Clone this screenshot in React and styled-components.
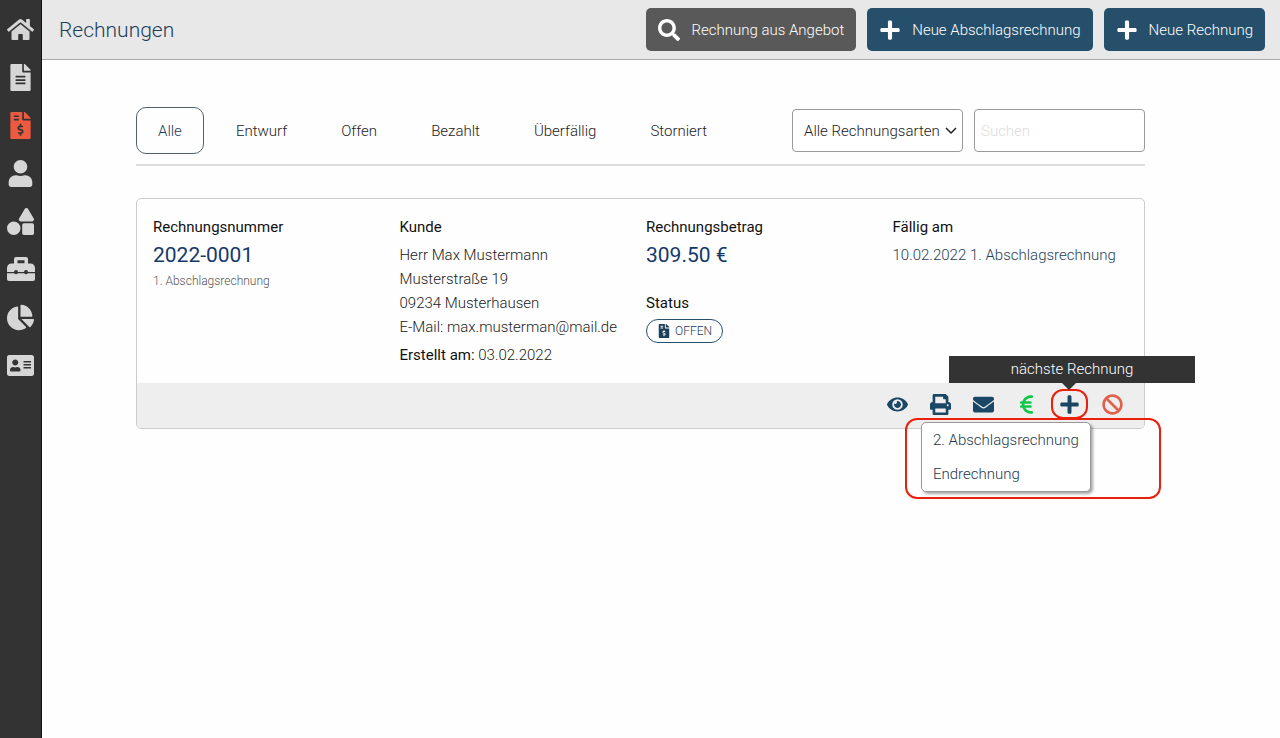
import React from "react";
import styled, { createGlobalStyle, css } from "styled-components";
import {
  FaAddressCard,
  FaBan,
  FaChartPie,
  FaEnvelope,
  FaEye,
  FaFileAlt,
  FaFileInvoiceDollar,
  FaHome,
  FaPlus,
  FaPrint,
  FaSearch,
  FaShapes,
  FaUser
} from "react-icons/fa";
import { FaEuroSign } from "react-icons/fa6";

const GlobalStyle = createGlobalStyle`
  *, *::before, *::after {
    box-sizing: border-box;
  }

  body {
    margin: 0;
    background: #fefefe;
    color: #222;
    font-family: Roboto, "Liberation Sans", sans-serif;
    font-size: 15px;
    font-weight: 300;
    line-height: 24px;
  }

  button, input, select {
    font: inherit;
  }
`;

const Page = styled.div`
  display: flex;
  min-height: 100vh;
`;

const Sidebar = styled.nav`
  display: flex;
  flex-direction: column;
  flex: none;
  width: 42px;
  padding-top: 5px;
  background: #333;
  border-right: 1px solid #111;
`;

const SidebarLink = styled.a`
  display: flex;
  align-items: center;
  justify-content: center;
  height: 48px;
  color: ${props => (props.$active ? "#ee5a40" : "#d6d6d6")};
  font-size: 27px;
`;

const Content = styled.div`
  flex: 1;
  min-width: 0;
`;

const Header = styled.header`
  display: flex;
  align-items: center;
  gap: 11px;
  height: 60px;
  padding: 0 15px 0 17px;
  background: #e8e8e8;
  border-bottom: 1px solid #aaa;
`;

const Title = styled.h1`
  flex: 1;
  margin: 0;
  color: #1c3f5c;
  font-size: 21px;
  font-weight: 300;
`;

const HeaderButton = styled.button`
  display: flex;
  align-items: center;
  gap: 11px;
  height: 43px;
  padding: 0 12px;
  border: 0;
  border-radius: 5px;
  background: ${props => (props.$muted ? "#595959" : "#264f6b")};
  color: #fff;
  white-space: nowrap;

  svg {
    font-size: 22px;
  }
`;

const Main = styled.main`
  padding: 47px 135px 0 94px;
`;

const FilterBar = styled.div`
  display: flex;
  align-items: center;
  justify-content: space-between;
  padding-bottom: 10px;
  border-bottom: 2px solid #ddd;
`;

const FilterGroup = styled.div`
  display: flex;
  gap: ${props => props.$gap};
`;

const Tab = styled.button`
  height: 47px;
  padding: 0 21px;
  border: 1px solid ${props => (props.$active ? "#51616e" : "transparent")};
  border-radius: 10px;
  background: transparent;
  color: ${props => (props.$active ? "#1c3f5c" : "#222")};
`;

const fieldStyles = css`
  width: 171px;
  height: 43px;
  border: 1px solid #999;
  border-radius: 4px;
  background: #fff;
  color: #222;
`;

const SelectWrap = styled.div`
  display: grid;
  align-items: center;

  select,
  svg {
    grid-area: 1 / 1;
  }

  svg {
    justify-self: end;
    margin-right: 6px;
    pointer-events: none;
  }
`;

const Select = styled.select`
  ${fieldStyles}
  padding: 0 11px;
  appearance: none;
`;

const SearchInput = styled.input`
  ${fieldStyles}
  padding: 0 6px;

  &::placeholder {
    color: #ddd;
    opacity: 1;
  }
`;

const Card = styled.article`
  margin-top: 32px;
  border: 1px solid #ccc;
  border-radius: 5px;
  background: #fefefe;
`;

const CardBody = styled.div`
  display: grid;
  grid-template-columns: repeat(4, 1fr);
  padding: 16px 5px 16px 16px;
`;

const Label = styled.h2`
  margin: 0 0 4px;
  color: #111;
  font-size: 15px;
  font-weight: 400;
`;

const Figure = styled.p`
  margin: 0;
  color: #14386b;
  font-size: 21px;
  font-weight: 400;
`;

const Note = styled.p`
  margin: 2px 0 0;
  color: #555;
  font-size: 12px;
`;

const Text = styled.p`
  margin: 0;
  color: ${props => (props.$blue ? "#1d4257" : "#222")};
`;

const Created = styled.p`
  margin: 4px 0 0;

  strong {
    color: #111;
    font-weight: 400;
  }
`;

const StatusLabel = styled(Label)`
  margin: 24px 0 4px;
`;

const StatusBadge = styled.span`
  display: inline-flex;
  align-items: center;
  gap: 4px;
  height: 24px;
  padding: 0 10px;
  border: 1px solid #264f6b;
  border-radius: 12px;
  color: #1c3f5c;
  font-size: 12px;

  svg {
    font-size: 14px;
  }
`;

const CardFooter = styled.div`
  display: flex;
  justify-content: flex-end;
  gap: 6px;
  padding: 6px 13px 9px;
  border-radius: 0 0 4px 4px;
  background: #eee;
`;

const ActionButton = styled.button`
  display: flex;
  align-items: center;
  justify-content: center;
  width: 37px;
  height: 30px;
  padding: 0;
  border: ${props => (props.$marked ? "2px solid #e8200c" : "0")};
  border-radius: 12px;
  background: transparent;
  color: ${props => props.$color || "#1b4766"};
  font-size: 21px;
`;

const NextInvoice = styled.div`
  position: relative;
`;

const Tooltip = styled.div`
  position: absolute;
  bottom: 36px;
  left: -102px;
  width: 246px;
  height: 27px;
  background: #333;
  color: #fff;
  line-height: 27px;
  text-align: center;

  &::after {
    content: "";
    position: absolute;
    top: 100%;
    left: 113px;
    border: 7px solid transparent;
    border-top-color: #333;
    border-bottom: 0;
  }
`;

const MenuFrame = styled.div`
  position: absolute;
  top: 29px;
  left: -146px;
  width: 256px;
  padding: 2px 14px 5px;
  border: 2px solid #e8200c;
  border-radius: 12px;
`;

const Menu = styled.ul`
  width: max-content;
  margin: 0;
  padding: 0;
  border: 1px solid #999;
  border-radius: 5px;
  background: #fff;
  box-shadow: 2px 2px 3px rgba(0, 0, 0, 0.35);
  list-style: none;
`;

const MenuLink = styled.a`
  display: block;
  padding: 5px 11px;
  color: #1d3a4f;
  text-decoration: none;
`;

const ToolboxIcon = () => (
  <svg width="28" height="26" viewBox="0 0 28 26" fill="currentColor">
    <path
      fillRule="evenodd"
      d="M7 7.500V3a2 2 0 0 1 2-2h10a2 2 0 0 1 2 2v4.500h2.500A4.500 4.500 0 0 1 28 12v4h-7a2 2 0 0 0-4 0h-6a2 2 0 0 0-4 0H0v-4a4.500 4.500 0 0 1 4.500-4.500zM10.500 4.200v3h7v-3z"
    />
    <path d="M0 17.200h7.200a2 2 0 0 0 3.600 0h6.400a2 2 0 0 0 3.600 0H28V23a2 2 0 0 1-2 2H2a2 2 0 0 1-2-2z" />
  </svg>
);

const ChevronIcon = () => (
  <svg width="12" height="8" viewBox="0 0 12 8" fill="none">
    <path d="M1 1l5 5 5-5" stroke="#222" strokeWidth="1.500" />
  </svg>
);

const navigation = [
  { label: "Start", icon: <FaHome /> },
  { label: "Angebote", icon: <FaFileAlt /> },
  { label: "Rechnungen", icon: <FaFileInvoiceDollar />, active: true },
  { label: "Kunden", icon: <FaUser /> },
  { label: "Artikel", icon: <FaShapes /> },
  { label: "Werkzeuge", icon: <ToolboxIcon /> },
  { label: "Auswertung", icon: <FaChartPie /> },
  { label: "Kontakt", icon: <FaAddressCard /> }
];

const tabs = [
  "Alle",
  "Entwurf",
  "Offen",
  "Bezahlt",
  "Überfällig",
  "Storniert"
];

const App = () => (
  <Page>
    <GlobalStyle />
    <Sidebar>
      {navigation.map(item => (
        <SidebarLink
          key={item.label}
          href="#"
          aria-label={item.label}
          $active={item.active}
        >
          {item.icon}
        </SidebarLink>
      ))}
    </Sidebar>
    <Content>
      <Header>
        <Title>Rechnungen</Title>
        <HeaderButton $muted>
          <FaSearch />
          Rechnung aus Angebot
        </HeaderButton>
        <HeaderButton>
          <FaPlus />
          Neue Abschlagsrechnung
        </HeaderButton>
        <HeaderButton>
          <FaPlus />
          Neue Rechnung
        </HeaderButton>
      </Header>
      <Main>
        <FilterBar>
          <FilterGroup $gap="10px">
            {tabs.map((tab, index) => (
              <Tab key={tab} $active={index === 0}>
                {tab}
              </Tab>
            ))}
          </FilterGroup>
          <FilterGroup $gap="11px">
            <SelectWrap>
              <Select aria-label="Rechnungsart">
                <option>Alle Rechnungsarten</option>
              </Select>
              <ChevronIcon />
            </SelectWrap>
            <SearchInput
              type="search"
              placeholder="Suchen"
              aria-label="Suchen"
            />
          </FilterGroup>
        </FilterBar>
        <Card>
          <CardBody>
            <div>
              <Label>Rechnungsnummer</Label>
              <Figure>2022-0001</Figure>
              <Note>1. Abschlagsrechnung</Note>
            </div>
            <div>
              <Label>Kunde</Label>
              <Text>Herr Max Mustermann</Text>
              <Text>Musterstraße 19</Text>
              <Text>09234 Musterhausen</Text>
              <Text>E-Mail: max.musterman@mail.de</Text>
              <Created>
                <strong>Erstellt am:</strong> 03.02.2022
              </Created>
            </div>
            <div>
              <Label>Rechnungsbetrag</Label>
              <Figure>309.50 €</Figure>
              <StatusLabel>Status</StatusLabel>
              <StatusBadge>
                <FaFileInvoiceDollar />
                OFFEN
              </StatusBadge>
            </div>
            <div>
              <Label>Fällig am</Label>
              <Text $blue>10.02.2022 1. Abschlagsrechnung</Text>
            </div>
          </CardBody>
          <CardFooter>
            <ActionButton aria-label="Ansehen">
              <FaEye />
            </ActionButton>
            <ActionButton aria-label="Drucken">
              <FaPrint />
            </ActionButton>
            <ActionButton aria-label="E-Mail senden">
              <FaEnvelope />
            </ActionButton>
            <ActionButton aria-label="Bezahlt" $color="#12c74b">
              <FaEuroSign />
            </ActionButton>
            <NextInvoice>
              <ActionButton aria-label="nächste Rechnung" $marked>
                <FaPlus />
              </ActionButton>
              <Tooltip role="tooltip">nächste Rechnung</Tooltip>
              <MenuFrame>
                <Menu>
                  <li>
                    <MenuLink href="#">2. Abschlagsrechnung</MenuLink>
                  </li>
                  <li>
                    <MenuLink href="#">Endrechnung</MenuLink>
                  </li>
                </Menu>
              </MenuFrame>
            </NextInvoice>
            <ActionButton aria-label="Stornieren" $color="#e0604a">
              <FaBan />
            </ActionButton>
          </CardFooter>
        </Card>
      </Main>
    </Content>
  </Page>
);

export default App;
